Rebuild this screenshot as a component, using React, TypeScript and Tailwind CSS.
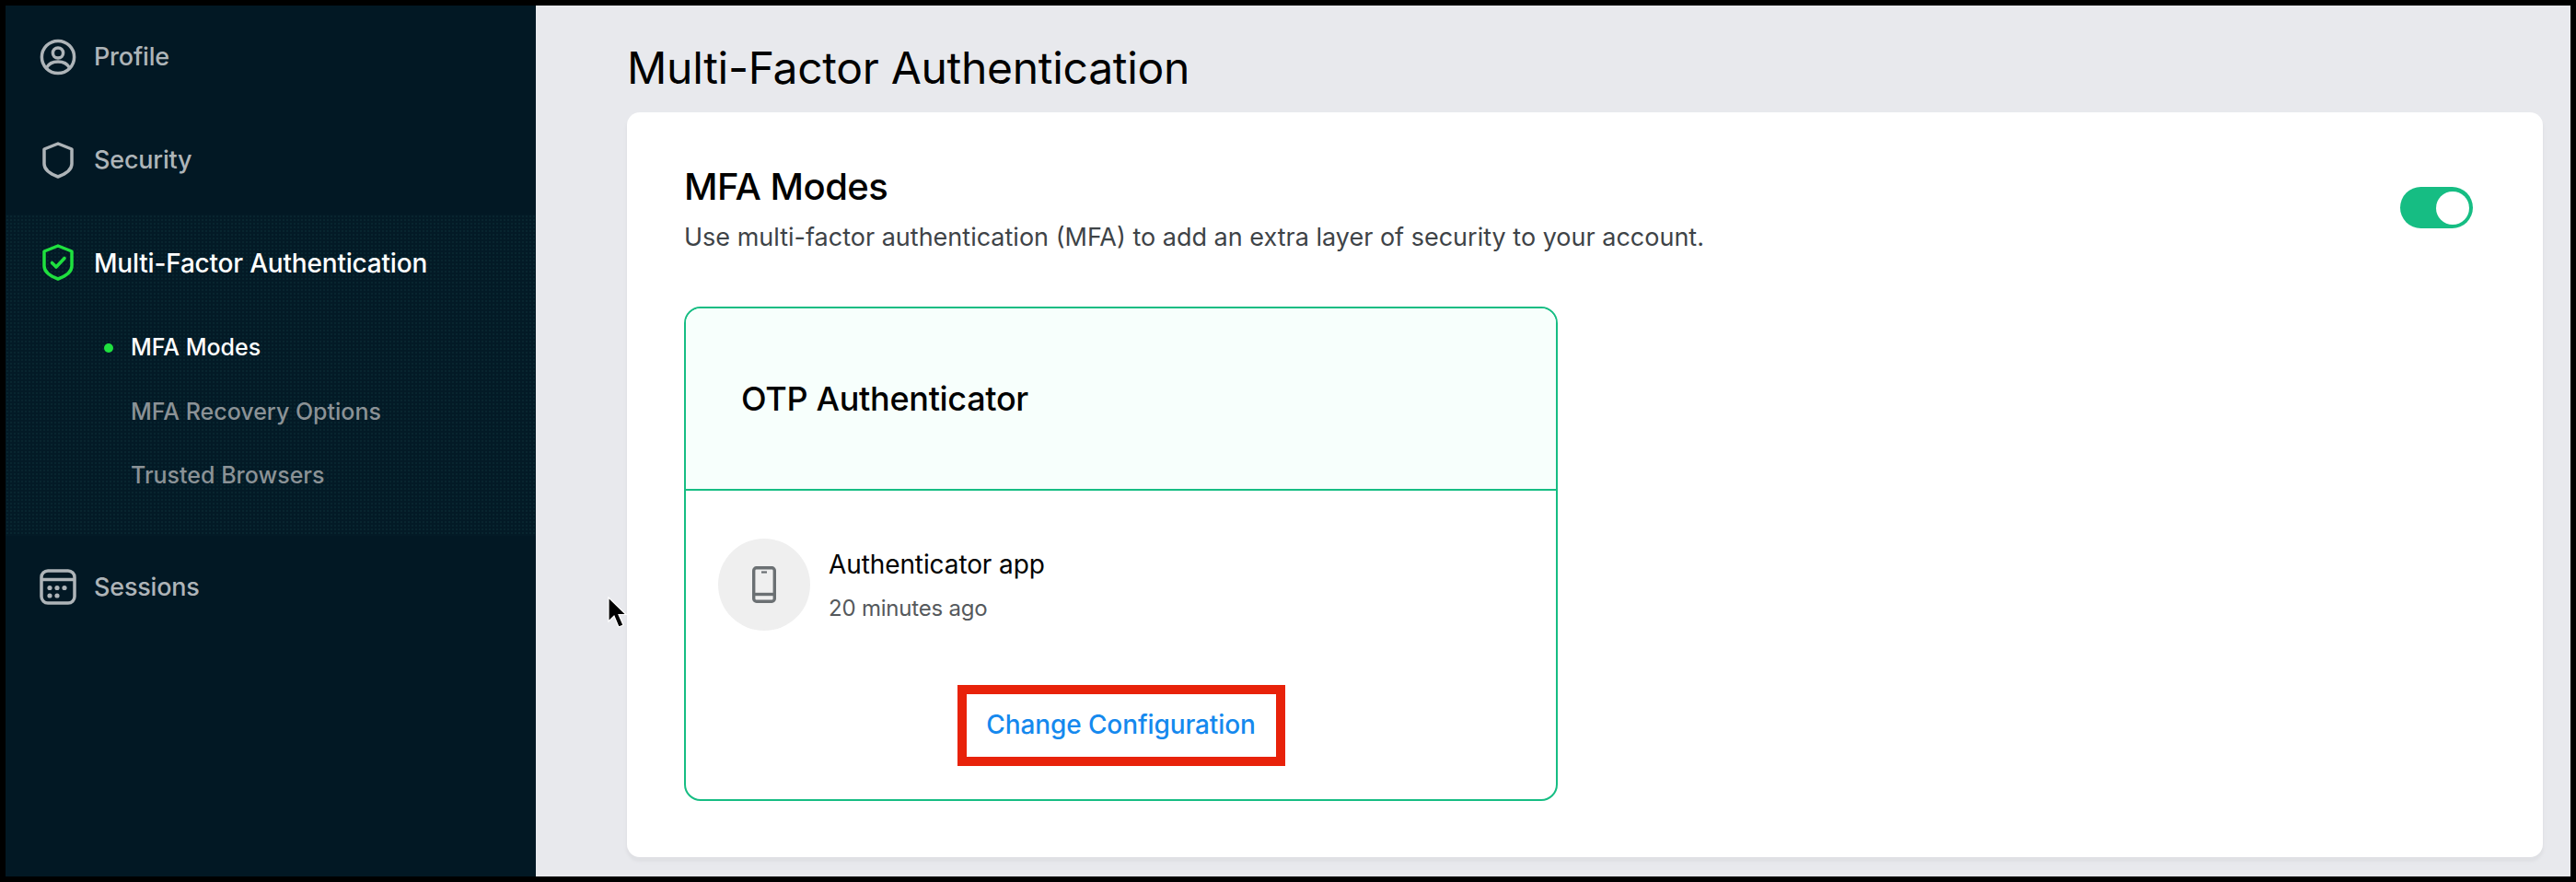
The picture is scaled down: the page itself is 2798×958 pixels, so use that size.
import React from "react";

const font = { fontFamily: 'Inter, "Noto Sans", sans-serif' };

function ProfileIcon() {
  return (
    <svg width="40" height="40" viewBox="0 0 40 40" fill="none" stroke="#aeb4b8" strokeWidth="3.5">
      <circle cx="20" cy="20" r="17.6" />
      <circle cx="20" cy="15.5" r="5.6" />
      <path d="M7.5 31.5C10 27 14.5 25 20 25s10 2 12.5 6.5" />
    </svg>
  );
}

function ShieldIcon({ color, check }: { color: string; check?: boolean }) {
  return (
    <svg width="40" height="40" viewBox="0 0 40 40" fill="none" stroke={color} strokeWidth="3.5" strokeLinejoin="round">
      <path d="M20 2 L35 8 V24 C35 30 28 35 20 38 C12 35 5 30 5 24 V8 Z" />
      {check && <path d="M13.5 20.5 L18 25 L27 15.5" strokeWidth="3.6" strokeLinecap="round" />}
    </svg>
  );
}

function SessionsIcon() {
  return (
    <svg width="40" height="40" viewBox="0 0 40 40" fill="none" stroke="#aeb4b8" strokeWidth="3.5">
      <rect x="2" y="2" width="36" height="35" rx="7" />
      <path d="M2 11.5H38" />
      <g fill="#aeb4b8" stroke="none">
        <circle cx="11" cy="20.5" r="2.6" />
        <circle cx="19" cy="20.5" r="2.6" />
        <circle cx="27" cy="20.5" r="2.6" />
        <circle cx="11" cy="29" r="2.6" />
        <circle cx="19" cy="29" r="2.6" />
      </g>
    </svg>
  );
}

function PhoneIcon() {
  return (
    <svg width="26" height="40" viewBox="0 0 26 40" fill="none" stroke="#6b7073" strokeWidth="3.4">
      <rect x="1.7" y="1.7" width="22.6" height="36.6" rx="3" />
      <path d="M1.5 30.5H24.5" />
      <path d="M10 6.5H16" strokeWidth="2.2" />
    </svg>
  );
}

function Cursor() {
  return (
    <svg className="absolute left-[78px] top-[642px]" width="24" height="36" viewBox="0 0 24 36">
      <path d="M1 1 V27 L7 21 L12 33 L17 31 L12 19.5 H20 Z" fill="#000" stroke="#fff" strokeWidth="1.2" />
    </svg>
  );
}

function NavRow({ icon, label, h }: { icon: React.ReactNode; label: string; h: string }) {
  return (
    <div className={`flex items-center pl-[37px] gap-[19px] ${h}`}>
      {icon}
      <span className="pt-[1px] text-[27px] font-medium text-[#aeb4b8] tracking-[-0.2px]">{label}</span>
    </div>
  );
}

export default function App() {
  return (
    <div style={font} className="w-[2798px] h-[958px] bg-black p-[6px] flex overflow-hidden">
      <aside className="w-[576px] h-full bg-[#021824] flex flex-col shrink-0">
        <NavRow icon={<ProfileIcon />} label="Profile" h="h-[112px]" />
        <NavRow icon={<ShieldIcon color="#aeb4b8" />} label="Security" h="h-[112px] mb-[3px]" />
        <div className="h-[349px] bg-[#031a26] bg-[radial-gradient(#08252f_1px,transparent_1px)] bg-[length:4px_4px]">
          <div className="flex items-center pl-[37px] gap-[19px] h-[109px] pb-[5px]">
            <ShieldIcon color="#1fe03f" check />
            <span className="pt-[2px] text-[28px] font-medium text-white tracking-[-0.2px]">Multi-Factor Authentication</span>
          </div>
          <div className="flex items-center h-[70px] pl-[107px] pt-[2px]">
            <span className="w-[10px] h-[10px] rounded-full bg-[#1fe03f] mr-[19px]" />
            <span className="text-[25px] font-medium text-white">MFA Modes</span>
          </div>
          <div className="flex items-center h-[70px] pl-[136px] pt-[2px] text-[25px] text-[#8b9296] font-medium">MFA Recovery Options</div>
          <div className="flex items-center h-[70px] pl-[136px] text-[25px] text-[#8b9296] font-medium">Trusted Browsers</div>
        </div>
        <NavRow icon={<SessionsIcon />} label="Sessions" h="h-[111px]" />
      </aside>
      <main className="relative flex-1 bg-[#e8e9ed] pl-[99px] pr-[30px] flex flex-col">
        <Cursor />
        <h1 className="h-[116px] pt-[20px] flex items-center text-[48px] font-normal text-black tracking-[-0.3px]">Multi-Factor Authentication</h1>
        <section className="h-[809px] bg-white rounded-[14px] shadow-[0_4px_3px_1px_#dfe0e4] pl-[62px] pr-[76px] pt-[58px]">
          <div className="flex justify-between items-start">
            <div>
              <h2 className="text-[40px] leading-[46px] font-medium text-black tracking-[-0.5px]">MFA Modes</h2>
              <p className="mt-[14px] text-[27px] leading-[36px] text-[#3e4347]">Use multi-factor authentication (MFA) to add an extra layer of security to your account.</p>
            </div>
            <div className="mt-[23px] w-[79px] h-[45px] rounded-full bg-[#16bd83] flex items-center justify-end pr-[4px]">
              <span className="w-[36px] h-[36px] rounded-full bg-white" />
            </div>
          </div>
          <div className="mt-[57px] w-[949px] h-[537px] rounded-[18px] border-2 border-[#16bd83] flex flex-col overflow-hidden">
            <div className="h-[198px] bg-[#f7fffc] border-b-2 border-[#16bd83] flex items-center pl-[60px]">
              <h3 className="text-[36px] font-medium text-black tracking-[-0.3px]">OTP Authenticator</h3>
            </div>
            <div className="flex items-start pl-[35px] pt-[52px] gap-[20px]">
              <div className="w-[100px] h-[100px] rounded-full bg-[#efefef] flex items-center justify-center">
                <PhoneIcon />
              </div>
              <div className="pt-[8px]">
                <div className="text-[28px] leading-[40px] text-black tracking-[-0.1px]">Authenticator app</div>
                <div className="mt-[10px] text-[24px] leading-[36px] text-[#55595c] tracking-[-0.2px]">20 minutes ago</div>
              </div>
            </div>
            <div className="flex justify-center mt-[59px]">
              <div className="w-[356px] h-[88px] pb-[3px] border-[10px] border-[#e8220a] flex items-center justify-center text-[28px] font-medium text-[#1589ee] tracking-[-0.1px]">
                Change Configuration
              </div>
            </div>
          </div>
        </section>
      </main>
    </div>
  );
}
